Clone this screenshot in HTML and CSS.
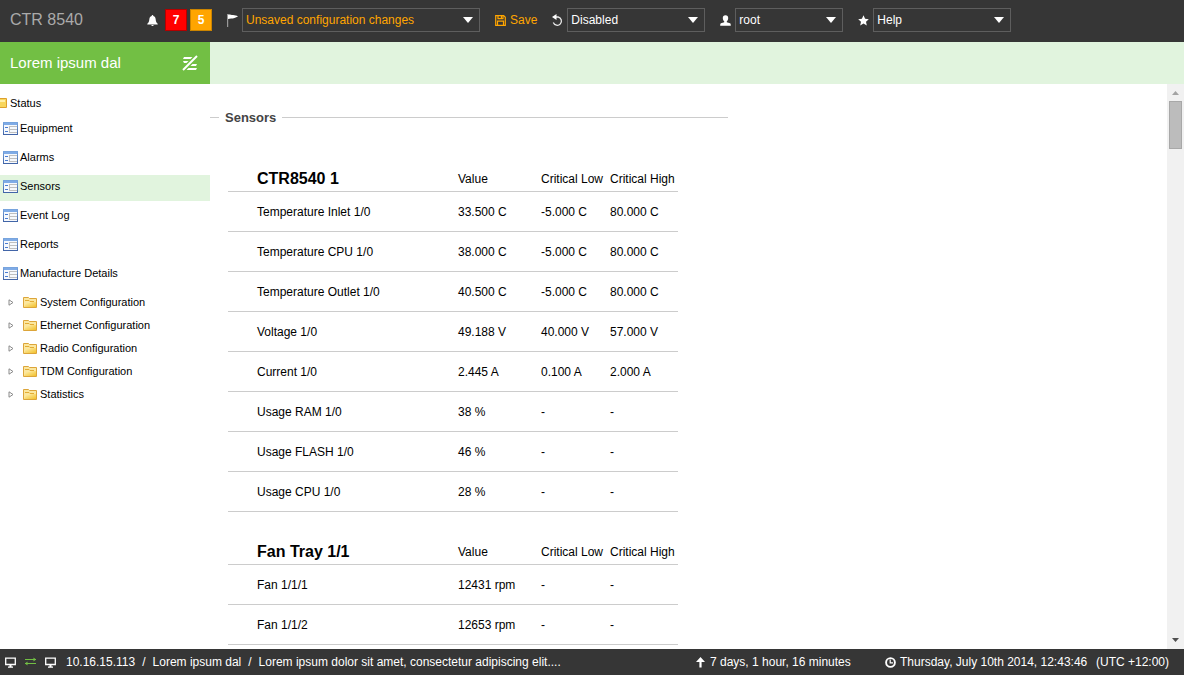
FILE: index.html
```html
<!DOCTYPE html>
<html lang="en">
<head>
<meta charset="utf-8">
<title>CTR 8540 - Sensors</title>
<link rel="stylesheet" href="styles.css">
</head>
<body>
<svg class="defs" aria-hidden="true">
  <defs>
    <linearGradient id="blue" x1="0" y1="0" x2="0" y2="1"><stop offset="0" stop-color="#7aa7e0"/><stop offset="1" stop-color="#3f62a5"/></linearGradient>
    <linearGradient id="gold" x1="0" y1="0" x2="1" y2="1"><stop offset="0" stop-color="#fff3b8"/><stop offset="1" stop-color="#f2c02c"/></linearGradient>
    <symbol id="form" viewBox="0 0 15 13">
      <path fill="url(#blue)" d="M0 0h15v13H0z"/><path fill="#7fabe6" d="M1 1h13v2H1z"/><path fill="#f6f9fd" d="M1 3h13v9H1z"/>
      <path fill="#4a7bd0" d="M2 5h3v1H2zM2 9h3v1H2z"/>
      <path fill="#fff" stroke="#bfbfbf" d="M6.500 4.500H14M6.500 4v7M6.500 7.500H14M6.500 10.500H14"/>
    </symbol>
    <symbol id="folder" viewBox="0 0 14 11">
      <path fill="#fbe7a0" stroke="#dca53a" d="M.5 10.500V.5h5l1 1h7v9z"/>
      <path fill="url(#gold)" d="M1 10l2-4h4l1-1h5v5z"/><path fill="none" stroke="#e3ac35" d="M2 3.500h4l1 1h4"/>
    </symbol>
    <symbol id="twist" viewBox="0 0 6 7"><path fill="#fff" stroke="#8a8a8a" d="M1 .8l4 2.700-4 2.700z"/></symbol>
    <symbol id="monitor" viewBox="0 0 11 11"><path fill="none" stroke="#fff" stroke-width="1.300" d="M.7 1.200h9.600v6.300H.7z"/><path fill="#fff" d="M4.500 7.500h2v2h1.500v1.200H3V9.500h1.500z"/></symbol>
    <symbol id="down" viewBox="0 0 10 6"><path fill="#fff" d="M0 0h10L5 6z"/></symbol>
  </defs>
</svg>
<header class="topbar">
  <h1 class="brand">CTR 8540</h1>
  <div class="alerts">
    <svg class="icon" viewBox="0 0 11 11"><path fill="#fff" d="M5.500 0c.6 0 .8.4.8.9C8 1.400 8.600 2.800 8.700 4.500c.1 2 .8 3.300 2 4.300V9.500H.3v-.7c1.200-1 1.900-2.300 2-4.300.1-1.700.7-3.100 2.400-3.600 0-.5.2-.9.8-.9zM4.200 10h2.600c-.2.600-.7 1-1.300 1s-1.100-.4-1.300-1z"/></svg>
    <div class="badges"><span class="badge critical">7</span><span class="badge major">5</span></div>
  </div>
  <div class="control">
    <svg class="icon flag" viewBox="0 0 11 13"><path fill="#999" d="M0 0h1.200v13H0z"/><path fill="#fff" d="M1 .5c2-.3 3 .4 5 .6 2 .3 3.500.5 5 1.400L7.500 4C5 4.800 3 4.300 1 5z"/></svg>
    <div class="pick wide"><select class="warn" aria-label="Configuration"><option>Unsaved configuration changes</option></select><svg class="caret"><use href="#down"/></svg></div>
  </div>
  <button class="save" type="button">
    <svg class="icon" viewBox="0 0 11 11"><path fill="none" stroke="#ffa500" stroke-width="1.200" d="M.7.7h8L10.300 2.300v8H.7z"/><path fill="none" stroke="#ffa500" stroke-width="1.200" d="M3 .7v3h5v-3M2.500 10V6.200h6V10"/><path fill="#ffa500" d="M5.800 1h1.200v2H5.800z"/></svg>
    <span>Save</span>
  </button>
  <div class="control">
    <svg class="icon undo" viewBox="0 0 11 13"><path fill="none" stroke="#e8e8e8" stroke-width="1.300" d="M3 3h3.200a4.200 4.200 0 1 1-4.900 5.600"/><path fill="#fff" d="M0 3l4.500-3v6z"/></svg>
    <div class="pick medium"><select aria-label="Rollback"><option>Disabled</option></select><svg class="caret"><use href="#down"/></svg></div>
  </div>
  <div class="control">
    <svg class="icon" viewBox="0 0 11 11"><path fill="#fff" d="M5.500.3c1.800 0 2.800 1.100 2.700 2.900C8.100 4.700 7.500 5.700 6.800 6.300v1l3.200.9c.6.2.8.7.8 2.500H.2c0-1.800.2-2.300.8-2.500l3.200-.9v-1C3.500 5.700 2.900 4.700 2.800 3.200 2.700 1.400 3.700.3 5.500.3z"/></svg>
    <div class="pick small"><select aria-label="User"><option>root</option></select><svg class="caret"><use href="#down"/></svg></div>
  </div>
  <div class="control">
    <svg class="icon" viewBox="0 0 11 11"><path fill="#fff" d="M5.500.3l1.600 3.500 3.700.4-2.800 2.500.8 3.800-3.300-2-3.300 2 .8-3.800L.2 4.200l3.700-.4z"/></svg>
    <div class="pick medium"><select aria-label="Help"><option>Help</option></select><svg class="caret"><use href="#down"/></svg></div>
  </div>
</header>
<div class="subbar">
  <div class="site"><span>Lorem ipsum dal</span>
    <svg class="swap" viewBox="0 0 16 16"><path fill="#fff" d="M2 2h10v2H1zM1 6h8v2H2zM8 9h7l-1 2H7zM5 13h10l-1 2H4z"/><path fill="none" stroke="#72bf44" stroke-width="5" d="M0 16L16 0"/><path fill="none" stroke="#fff" stroke-width="2" d="M1 15L15 1"/></svg>
  </div>
</div>
<div class="body">
  <nav class="tree" aria-label="Navigation">
    <div class="root"><svg class="half" viewBox="0 0 7 10"><path fill="#f8d65c" stroke="#dda02c" d="M-1 .5h7.500v9H-1z"/><path fill="#fff0a8" d="M0 2h5v2H0z"/></svg><span>Status</span></div>
    <ul class="pages">
      <li><a href="#"><svg class="form"><use href="#form"/></svg>Equipment</a></li>
      <li><a href="#"><svg class="form"><use href="#form"/></svg>Alarms</a></li>
      <li><a href="#" class="current" aria-current="page"><svg class="form"><use href="#form"/></svg>Sensors</a></li>
      <li><a href="#"><svg class="form"><use href="#form"/></svg>Event Log</a></li>
      <li><a href="#"><svg class="form"><use href="#form"/></svg>Reports</a></li>
      <li><a href="#"><svg class="form"><use href="#form"/></svg>Manufacture Details</a></li>
    </ul>
    <ul class="folders">
      <li><a href="#"><svg class="twist"><use href="#twist"/></svg><svg class="folder"><use href="#folder"/></svg>System Configuration</a></li>
      <li><a href="#"><svg class="twist"><use href="#twist"/></svg><svg class="folder"><use href="#folder"/></svg>Ethernet Configuration</a></li>
      <li><a href="#"><svg class="twist"><use href="#twist"/></svg><svg class="folder"><use href="#folder"/></svg>Radio Configuration</a></li>
      <li><a href="#"><svg class="twist"><use href="#twist"/></svg><svg class="folder"><use href="#folder"/></svg>TDM Configuration</a></li>
      <li><a href="#"><svg class="twist"><use href="#twist"/></svg><svg class="folder"><use href="#folder"/></svg>Statistics</a></li>
    </ul>
  </nav>
  <main class="content">
    <h2 class="legend">Sensors</h2>
    <table class="sensors">
      <colgroup><col class="c-name"><col class="c-value"><col class="c-low"><col class="c-high"></colgroup>
      <thead><tr><th class="unit">CTR8540 1</th><th>Value</th><th>Critical Low</th><th>Critical High</th></tr></thead>
      <tbody>
        <tr><td>Temperature Inlet 1/0</td><td>33.500 C</td><td>-5.000 C</td><td>80.000 C</td></tr>
        <tr><td>Temperature CPU 1/0</td><td>38.000 C</td><td>-5.000 C</td><td>80.000 C</td></tr>
        <tr><td>Temperature Outlet 1/0</td><td>40.500 C</td><td>-5.000 C</td><td>80.000 C</td></tr>
        <tr><td>Voltage 1/0</td><td>49.188 V</td><td>40.000 V</td><td>57.000 V</td></tr>
        <tr><td>Current 1/0</td><td>2.445 A</td><td>0.100 A</td><td>2.000 A</td></tr>
        <tr><td>Usage RAM 1/0</td><td>38 %</td><td>-</td><td>-</td></tr>
        <tr><td>Usage FLASH 1/0</td><td>46 %</td><td>-</td><td>-</td></tr>
        <tr><td>Usage CPU 1/0</td><td>28 %</td><td>-</td><td>-</td></tr>
      </tbody>
    </table>
    <table class="sensors">
      <colgroup><col class="c-name"><col class="c-value"><col class="c-low"><col class="c-high"></colgroup>
      <thead><tr><th class="unit">Fan Tray 1/1</th><th>Value</th><th>Critical Low</th><th>Critical High</th></tr></thead>
      <tbody>
        <tr><td>Fan 1/1/1</td><td>12431 rpm</td><td>-</td><td>-</td></tr>
        <tr><td>Fan 1/1/2</td><td>12653 rpm</td><td>-</td><td>-</td></tr>
      </tbody>
    </table>
  </main>
  <div class="scrollbar" aria-hidden="true">
    <svg class="arrow" viewBox="0 0 17 17"><path fill="#a3a3a3" d="M5 11l3.500-4L12 11z"/></svg>
    <div class="thumb"></div>
    <svg class="arrow end" viewBox="0 0 17 17"><path fill="#505050" d="M5 6h7l-3.500 4z"/></svg>
  </div>
</div>
<footer class="statusbar">
  <div class="link">
    <svg class="icon"><use href="#monitor"/></svg>
    <svg class="icon" viewBox="0 0 11 11"><path fill="none" stroke="#72bf44" d="M0 2.500h11M0 6.500h11"/><path fill="#72bf44" d="M8.500 .5L11 2.500 8.500 4.500zM2.500 4.500L0 6.500l2.500 2z"/></svg>
    <svg class="icon"><use href="#monitor"/></svg>
  </div>
  <div class="crumbs"><span>10.16.15.113</span><span>/</span><span>Lorem ipsum dal</span><span>/</span><span>Lorem ipsum dolor sit amet, consectetur adipiscing elit....</span></div>
  <div class="uptime"><svg class="icon" viewBox="0 0 11 11"><path fill="#fff" d="M5.500 0L10 5H6.600v5.500H4.400V5H1z"/></svg><span>7 days, 1 hour, 16 minutes</span></div>
  <div class="clock"><svg class="icon" viewBox="0 0 11 11"><circle cx="5.500" cy="5.500" r="4.400" fill="none" stroke="#fff" stroke-width="1.900"/><path fill="none" stroke="#fff" stroke-width="1.200" d="M5.200 2.500v3.300H8"/></svg><span>Thursday, July 10th 2014, 12:43:46</span><span class="zone">(UTC +12:00)</span></div>
</footer>
</body>
</html>
```
FILE: styles.css
```css
* { box-sizing: border-box; }
body {
  margin: 0;
  height: 100vh;
  display: flex;
  flex-direction: column;
  overflow: hidden;
  background: #fff;
  color: #000;
  font: 12px/16px "Liberation Sans", Arial, sans-serif;
}
svg { display: block; flex: none; }
ul { list-style: none; margin: 0; padding: 0; }
a { color: inherit; text-decoration: none; }
.defs { position: absolute; width: 0; height: 0; }
.icon { width: 11px; height: 11px; }

.topbar {
  flex: none;
  display: flex;
  align-items: center;
  gap: 15px;
  padding: 0 10px 2px;
  height: 42px;
  background: #363636;
  color: #fff;
}
.brand { margin: 0; width: 122px; font-size: 16px; font-weight: 400; color: #aaa; white-space: nowrap; }
.alerts { display: flex; align-items: center; gap: 7px; }
.badges { display: flex; gap: 3px; }
.badge { width: 22px; height: 22px; border: 1px solid; text-align: center; line-height: 20px; font-weight: 700; }
.critical { background: #f00; border-color: #b30000; }
.major { background: #ffa500; border-color: #cc8400; }
.control { display: flex; align-items: center; gap: 4px; }
.flag, .undo { height: 13px; }
.pick { display: grid; align-items: center; }
.pick select, .caret { grid-area: 1 / 1; }
.pick select {
  appearance: none;
  width: 100%;
  height: 24px;
  margin: 0;
  padding: 0 20px 0 3px;
  border: 1px solid #5e5e5e;
  border-radius: 0;
  background: #363636;
  color: #fff;
  font: inherit;
}
.pick select.warn { color: #ffa500; }
.caret { justify-self: end; width: 10px; height: 6px; margin-right: 7px; pointer-events: none; }
.wide { width: 238px; }
.medium { width: 138px; }
.small { width: 108px; }
.save { display: flex; align-items: center; gap: 4px; padding: 0; border: 0; background: none; color: #ffa500; font: inherit; }

.subbar { flex: none; height: 42px; background: #e1f4de; }
.site {
  display: flex;
  align-items: center;
  justify-content: space-between;
  width: 210px;
  height: 100%;
  padding: 0 12px 0 10px;
  background: #72bf44;
  color: #fff;
  font-size: 15px;
}
.swap { width: 16px; height: 16px; }

.body { flex: 1; min-height: 0; display: flex; }
.tree { flex: none; width: 210px; padding-top: 5px; font-size: 11px; line-height: 15px; }
.root { display: flex; align-items: center; gap: 3px; height: 28px; }
.half { width: 7px; height: 10px; }
.pages { display: grid; gap: 3px; }
.pages a { display: flex; align-items: center; gap: 2px; height: 26px; padding: 0 0 3px 3px; }
.pages a.current { background: #e1f4de; }
.form { width: 15px; height: 13px; }
.folders { padding-top: 3px; }
.folders a { display: flex; align-items: center; gap: 3px; height: 23px; padding-left: 8px; }
.twist { width: 6px; height: 7px; margin-right: 6px; }
.folder { width: 14px; height: 11px; }

.content { flex: 1; min-width: 0; padding-top: 25px; overflow: hidden; }
.legend {
  display: flex;
  align-items: center;
  gap: 6px;
  width: 518px;
  margin: 0 0 33px;
  font-size: 13px;
  line-height: 17px;
  color: #444;
}
.legend::before, .legend::after { content: ""; height: 1px; background: #ccc; }
.legend::before { width: 9px; }
.legend::after { flex: 1; }
.sensors { width: 450px; margin: 0 0 20px 18px; table-layout: fixed; border-collapse: separate; border-spacing: 0; }
.c-name { width: 230px; }
.c-value { width: 83px; }
.c-low { width: 69px; }
.c-high { width: 68px; }
.sensors th, .sensors td { padding: 0; border-bottom: 1px solid #ccc; text-align: left; white-space: nowrap; }
.sensors th { height: 33px; padding-bottom: 3px; vertical-align: bottom; font-weight: 400; line-height: 18px; }
.sensors th.unit { font-size: 16px; font-weight: 700; }
.sensors td { height: 40px; }
.sensors tr > :first-child { padding-left: 29px; }

.scrollbar { flex: none; display: flex; flex-direction: column; width: 17px; background: #f1f1f1; }
.arrow { width: 17px; height: 17px; }
.end { margin-top: auto; }
.thumb { height: 48px; margin: 0 2px; border: 1px solid #a8a8a8; background: #bcbcbc; }

.statusbar {
  flex: none;
  display: flex;
  align-items: center;
  height: 26px;
  padding: 0 15px 0 5px;
  background: #363636;
  color: #fff;
}
.link { display: flex; gap: 9px; margin-right: 10px; }
.crumbs { display: flex; gap: 7px; margin-right: auto; }
.uptime, .clock { display: flex; align-items: center; gap: 4px; }
.uptime { min-width: 160px; margin-right: 30px; }
.clock { min-width: 284px; }
.zone { margin-left: auto; }
```
